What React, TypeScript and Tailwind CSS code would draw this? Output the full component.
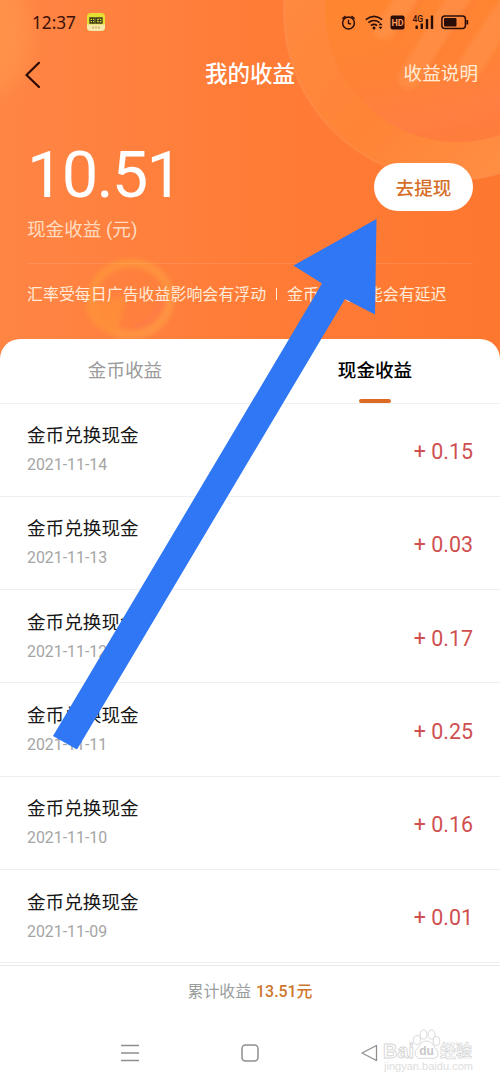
interface Earning {
  date: string
  amount: string
}

const earnings: Earning[] = [
  { date: '2021-11-14', amount: '0.15' },
  { date: '2021-11-13', amount: '0.03' },
  { date: '2021-11-12', amount: '0.17' },
  { date: '2021-11-11', amount: '0.25' },
  { date: '2021-11-10', amount: '0.16' },
  { date: '2021-11-09', amount: '0.01' },
]

function HeaderArt() {
  return (
    <svg
      className="absolute inset-0"
      width="500"
      height="360"
      viewBox="0 0 500 360"
      fill="none"
    >
      <defs>
        <linearGradient id="ring" x1="290" y1="0" x2="480" y2="180" gradientUnits="userSpaceOnUse">
          <stop offset="0" stopColor="#ff893f" />
          <stop offset="0.55" stopColor="#ff8436" />
          <stop offset="1" stopColor="#ff8d42" />
        </linearGradient>
        <linearGradient id="disc" x1="400" y1="0" x2="430" y2="142" gradientUnits="userSpaceOnUse">
          <stop offset="0" stopColor="#ff8631" />
          <stop offset="0.5" stopColor="#ff8236" />
          <stop offset="0.85" stopColor="#ff7f42" />
          <stop offset="1" stopColor="#fe7c3c" />
        </linearGradient>
        <linearGradient id="coin" x1="90" y1="260" x2="170" y2="335" gradientUnits="userSpaceOnUse">
          <stop offset="0" stopColor="#ff8f38" />
          <stop offset="0.5" stopColor="#ff933e" />
          <stop offset="1" stopColor="#ff9345" />
        </linearGradient>
        <filter id="soft" x="-20%" y="-20%" width="140%" height="140%">
          <feGaussianBlur stdDeviation="2" />
        </filter>
        <filter id="softer" x="-50%" y="-50%" width="200%" height="200%">
          <feGaussianBlur stdDeviation="9" />
        </filter>
      </defs>

      <ellipse cx="-8" cy="35" rx="38" ry="58" fill="#ff9148" filter="url(#softer)" />

      {/* Big coin */}
      <circle cx="452" cy="12" r="169" fill="url(#ring)" />
      <circle cx="452" cy="12" r="167.5" stroke="#ff8c4c" strokeOpacity="0.5" strokeWidth="2.5" />
      <circle cx="457" cy="10" r="132" fill="url(#disc)" />
      <g filter="url(#soft)" strokeLinecap="round">
        <path d="M384 30L410 -6" stroke="#ff8e43" strokeWidth="20" />
        <path d="M409 78L462 -8" stroke="#ff8c43" strokeWidth="22" />
        <path d="M470 66L506 12" stroke="#ff8c43" strokeWidth="24" />
        <path d="M396 38L424 -4M424 80L478 -6" stroke="#fd7e36" strokeWidth="3" />
      </g>

      {/* Small coin */}
      <g filter="url(#soft)">
        <ellipse cx="131" cy="299" rx="39" ry="36" stroke="url(#coin)" strokeWidth="9" />
        <path d="M84 308Q104 300 128 296Q120 314 118 334Q94 334 84 308Z" fill="#ff8e3a" opacity="0.8" />
        <path d="M134 328Q160 318 163 296" stroke="#fb765a" strokeWidth="4" opacity="0.45" />
      </g>
    </svg>
  )
}

function StatusBar() {
  return (
    <div className="flex h-[44px] items-center justify-between pl-[32px] pr-[31px]">
      <div className="flex items-center gap-[12px]">
        <span className="w-[43px] pt-px font-['Noto_Sans'] text-[17.2px] leading-none text-[#3b1108]">12:37</span>
        <svg width="18" height="18" viewBox="0 0 18 18">
          <rect width="18" height="18" rx="4" fill="#e4de35" />
          <path d="M0 11.500H18V14Q18 18 14 18H4Q0 18 0 14Z" fill="#f5e8ac" />
          <path d="M3 5h5v5H3zM9.500 5h5.500v5H9.500z" stroke="#38371b" strokeWidth="1.300" fill="none" />
          <path d="M3 7.500h4M10.500 7.500h3.500M5.500 5v5M12.300 6v3" stroke="#38371b" strokeWidth="1.100" />
          <path d="M5 14.500h8" stroke="#d8bb72" strokeWidth="2" strokeDasharray="2 1" />
        </svg>
      </div>

      <svg width="128" height="20" viewBox="341 12 128 20" fill="none" stroke="#2b0d07">
        {/* Alarm */}
        <circle cx="348.500" cy="23" r="5.900" strokeWidth="1.500" />
        <path d="M342.300 18.700L345.500 16M354.700 18.700L351.500 16M348.500 19.800V23.500L351 24" strokeWidth="1.400" />
        {/* Wifi */}
        <path d="M365.800 19.600Q374 13 382.200 19.600M368.400 22.700Q374 18.300 379.600 22.700M370.900 25.600Q374 23.200 377.100 25.600" strokeWidth="1.700" />
        <circle cx="374" cy="28" r="1.500" fill="#2b0d07" stroke="none" />
        <path d="M378.500 25.200L380.500 22.700L382.500 25.200ZM378.500 26.800L380.500 29.300L382.500 26.800Z" fill="#2b0d07" stroke="none" />
        {/* HD */}
        <rect x="390.500" y="15.500" width="14" height="14" rx="2" fill="#2b0d07" stroke="none" />
        <text x="397.500" y="25.900" textAnchor="middle" fontFamily="Roboto" fontSize="9" fontWeight="700" fill="#ff9a5c" stroke="none">HD</text>
        {/* Signal */}
        <text x="412.500" y="22" fontFamily="Roboto" fontSize="8.500" fontWeight="500" fill="#2b0d07" stroke="none">4G</text>
        <path d="M416.700 25.500V29M421.800 23.500V29M427 19V29M432 15.500V29" strokeWidth="2.400" />
        {/* Battery */}
        <rect x="441.900" y="15.900" width="23.500" height="12.600" rx="3" strokeWidth="1.500" />
        <rect x="444" y="18" width="12.500" height="8.500" rx="1" fill="#2b0d07" stroke="none" />
        <path d="M467.300 20V24.500" strokeWidth="1.800" />
      </svg>
    </div>
  )
}

function Watermark() {
  return (
    <svg
      className="absolute left-[380px] top-[1026px]"
      width="100"
      height="50"
      viewBox="380 1026 100 50"
      fill="#ffffff"
      stroke="#d5d5d5"
      strokeWidth="0.9"
      fontFamily="'Liberation Sans', 'Noto Sans CJK SC', sans-serif"
    >
      <text x="383" y="1058" fontSize="21" fontWeight="700" textLength="31" lengthAdjust="spacingAndGlyphs">Bai</text>
      <ellipse cx="417" cy="1040" rx="3.500" ry="4.500" />
      <ellipse cx="423.500" cy="1034.500" rx="3.500" ry="4.700" />
      <ellipse cx="431.500" cy="1034.500" rx="3.500" ry="4.700" />
      <ellipse cx="436.500" cy="1041" rx="3.300" ry="4.500" />
      <path d="M426.500 1041C421 1041 420 1046 417 1049C413 1053 416 1059 421 1058.500C425 1058 428 1058 432 1058.500C438 1059 440 1053 436 1049C433 1046 432 1041 426.500 1041Z" />
      <text x="426.500" y="1055" textAnchor="middle" fontSize="12" fontWeight="700" fill="#c8c8c8" stroke="none">du</text>
      <text x="440" y="1057" fontSize="16.500" fontWeight="700" strokeWidth="0.7" textLength="32" lengthAdjust="spacingAndGlyphs">经验</text>
      <text x="384" y="1070" fontSize="10.500" textLength="89" lengthAdjust="spacingAndGlyphs" fill="#dedede" stroke="none">jingyan.baidu.com</text>
    </svg>
  )
}

export default function App() {
  return (
    <div className="relative flex h-[1084px] w-[500px] flex-col overflow-hidden bg-white font-[Roboto,'Noto_Sans_CJK_SC',sans-serif]">
      {/* Header */}
      <header className="relative h-[339px] shrink-0 text-white">
        <div className="absolute inset-x-0 top-0 h-[359px] overflow-hidden bg-linear-to-r from-[#ff8545] via-[#ff7c37] to-[#fe772f]">
          <HeaderArt />
        </div>

        <div className="relative">
          <StatusBar />

          <div className="grid h-[60px] grid-cols-3 items-center pl-[24px] pr-[22px]">
            <svg width="16" height="27" viewBox="0 0 16 27" fill="none" stroke="#2c0a04" strokeWidth="2.2" strokeLinecap="round" strokeLinejoin="round">
              <path d="M15 1.800L2.500 14L15 26" />
            </svg>
            <h1 className="-ml-[2px] text-center text-[22.5px] leading-none font-medium">我的收益</h1>
            <span className="pt-px text-right text-[18.6px] leading-none text-[#ffebd6]">收益说明</span>
          </div>

          <div className="flex h-[159px] items-start justify-between pl-[27px] pr-[27px]">
            <div>
              <div className="mt-[39px] text-[65px] leading-[64px] tracking-[-1.8px]">10.51</div>
              <div className="mt-[9px] text-[18.6px] leading-[28px] whitespace-pre text-[#ffdcc0]">现金收益 (元)</div>
            </div>
            <button className="mt-[59px] h-[48px] w-[99px] rounded-full bg-white pt-[5px] text-[18.6px] font-medium text-[#d56f29]">
              去提现
            </button>
          </div>

          <div className="mx-[27px] border-t border-white/10 pt-[19px] text-[15.95px] leading-[24px] whitespace-nowrap text-[#ffebd8]">
            汇率受每日广告收益影响会有浮动<span className="mx-[10px] inline-block h-[12px] w-px bg-[#ffebd8]" />金币兑换可能会有延迟
          </div>
        </div>
      </header>

      {/* Earnings */}
      <main className="relative h-[626px] shrink-0 rounded-t-[20px] bg-white">
        <div className="grid h-[64.5px] grid-cols-2 border-b border-[#f0f0f0] text-center text-[18.6px] leading-[65px]">
          <div className="text-[#9b9b9b]">金币收益</div>
          <div className="flex flex-col items-center font-medium text-black">
            <span className="h-[60px]">现金收益</span>
            <span className="h-[4px] w-[32px] shrink-0 rounded-full bg-[#dd6b25]" />
          </div>
        </div>

        <ul>
          {earnings.map((item) => (
            <li
              key={item.date}
              className="flex h-[93.3px] items-center justify-between border-b border-[#efefef] px-[27px]"
            >
              <div className="pb-[1px]">
                <div className="text-[18.6px] leading-[28px] text-[#171717]">金币兑换现金</div>
                <div className="mt-[4px] text-[15.9px] leading-[22px] text-[#a5a5a5]">{item.date}</div>
              </div>
              <div className="pt-[4px] text-[21.4px] leading-none text-[#cf4f50]">+ {item.amount}</div>
            </li>
          ))}
        </ul>
      </main>

      {/* Total */}
      <footer className="flex h-[52px] shrink-0 items-center justify-center gap-[5px] border-t border-[#e9e9e9] text-[15.9px]">
        <span className="text-[#999d9d]">累计收益</span>
        <span className="font-medium text-[#ce762c]">13.51元</span>
      </footer>

      {/* System navigation */}
      <nav className="flex h-[67px] shrink-0 items-center justify-between px-[121px] pt-[5px]">
        <svg width="18" height="18" viewBox="0 0 18 18" stroke="#8e8e8e" strokeWidth="1.3">
          <path d="M0 1.500H18M0 9H18M0 16.500H18" />
        </svg>
        <svg width="18" height="18" viewBox="0 0 18 18" fill="none" stroke="#8e8e8e" strokeWidth="1.5">
          <rect x="1" y="1" width="16" height="16" rx="3.500" />
        </svg>
        <svg width="18" height="18" viewBox="0 0 18 18" fill="none" stroke="#8e8e8e" strokeWidth="1.3" strokeLinejoin="round">
          <path d="M1 9L15.500 1.500V16.500Z" />
        </svg>
      </nav>

      <Watermark />

      {/* Pointer to the withdraw button */}
      <svg
        className="pointer-events-none absolute inset-0"
        width="500"
        height="1084"
        viewBox="0 0 500 1084"
        fill="#2f77f4"
      >
        <path d="M376.500 219L293.500 265.500L322 283.500L53 736L77 749.500L345 299L375 314.500Z" />
      </svg>
    </div>
  )
}
